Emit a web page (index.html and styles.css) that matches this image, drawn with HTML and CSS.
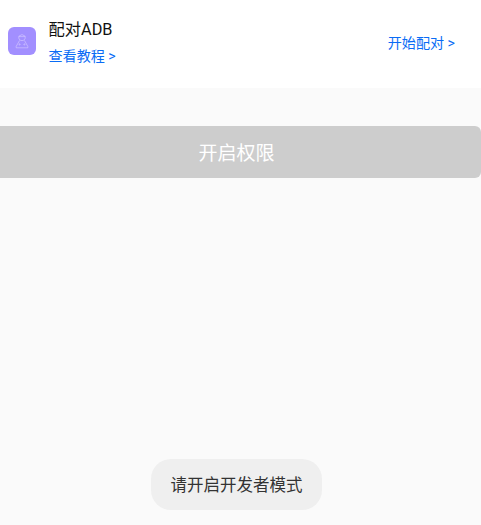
FILE: index.html
```
<!DOCTYPE html>
<html lang="zh-CN">
<head>
<meta charset="utf-8">
<title>配对ADB</title>
<link rel="stylesheet" href="styles.css">
</head>
<body>
<header class="card">
  <div class="app-icon">
    <svg viewBox="0 0 28 28" width="28" height="28" fill="none" stroke="#d9ccff" stroke-width="0.6">
      <path d="M10.8 9.2 14 7.6l3.2 1.6v1.6c0 1.6-1.4 2.8-3.2 2.8s-3.2-1.2-3.2-2.8z"/>
      <path d="M11 9.6h6"/>
      <path d="M11.6 13.4 8.2 19.4v1.4h11.6v-1.4l-3.4-6"/>
      <circle cx="11.6" cy="17.4" r="0.6"/>
      <circle cx="16.4" cy="17.4" r="0.6"/>
    </svg>
  </div>
  <div class="info">
    <div class="title">配对ADB</div>
    <div class="link">查看教程 &gt;</div>
  </div>
  <div class="link action">开始配对 &gt;</div>
</header>
<button class="grant" type="button">开启权限</button>
<div class="toast">请开启开发者模式</div>
</body>
</html>
```
FILE: styles.css
```
* { box-sizing: border-box; }
html, body { height: 100%; }
body {
  margin: 0;
  position: relative;
  overflow: hidden;
  background: #fafafa;
  font-family: Roboto, "Noto Sans CJK SC", "Noto Sans", sans-serif;
}
.card {
  height: 88px;
  background: #fff;
  display: flex;
  align-items: center;
  padding: 0 26px 6px 8px;
}
.app-icon {
  width: 28px;
  height: 28px;
  border-radius: 6px;
  background: #a28fff;
  flex: none;
}
.app-icon svg { display: block; }
.info {
  flex: 1;
  margin: 3px 0 0 12.5px;
  display: flex;
  flex-direction: column;
  gap: 5px;
}
.title {
  font-size: 16.3px;
  line-height: 22px;
  color: #111;
}
.link {
  font-size: 14.1px;
  line-height: 20px;
  color: #0a6cf5;
}
.action {
  flex: none;
  margin-top: 4px;
}
.grant {
  display: block;
  width: 489px;
  height: 52px;
  margin: 38px 0 0 -8px;
  border: 0;
  border-radius: 6px;
  background: #cdcdcd;
  color: #fff;
  font: inherit;
  font-size: 19px;
  padding: 0 0 2px;
}
.toast {
  position: absolute;
  left: 151px;
  top: 459px;
  width: 171px;
  height: 51px;
  padding-bottom: 2px;
  border-radius: 20px;
  background: #efefef;
  color: #333;
  font-size: 16.5px;
  display: flex;
  align-items: center;
  justify-content: center;
}
```
